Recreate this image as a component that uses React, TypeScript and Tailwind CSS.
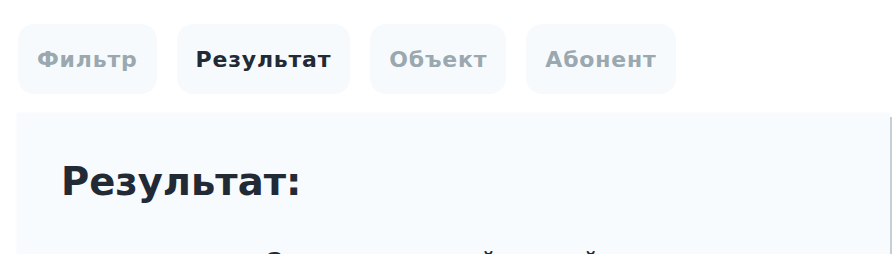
import { useState } from 'react'

const tabs = ['Фильтр', 'Результат', 'Объект', 'Абонент']

export default function App() {
    const [active, setActive] = useState('Результат')

    return (
        <div
            className="w-[892px] h-[254px] overflow-hidden bg-white"
            style={{ fontFamily: '"DejaVu Sans", "Noto Sans", sans-serif' }}
        >
            {/* tabs */}
            <div className="flex gap-5 pl-[18px] pt-6">
                {tabs.map(tab => (
                    <button
                        key={tab}
                        onClick={() => setActive(tab)}
                        className={
                            'h-[70px] px-[19px] rounded-2xl bg-[#f7fafd] text-[22px] font-bold tracking-[0.8px] ' +
                            (active === tab ? 'text-[#222a36]' : 'text-[#9aa8b0]')
                        }
                    >
                        {tab}
                    </button>
                ))}
            </div>

            {/* result panel */}
            <div className="flex mt-[19px] ml-[17px]">
                <div className="flex-1 h-[200px] bg-[#f7fbfe] shadow-[0_0_3px_rgba(0,0,0,0.04)] pl-[44px] pt-[45px]">
                    <h2 className="text-[38.5px] leading-[48px] font-bold text-[#222a36]">
                        Результат:
                    </h2>
                    <p className="mt-[38px] pl-[203px] text-[24px] font-bold text-[#222a36]">
                        Сведения по найденной записи
                    </p>
                </div>
                <div className="w-[2px] mt-1 bg-[#c6ced6]" />
            </div>
        </div>
    )
}
